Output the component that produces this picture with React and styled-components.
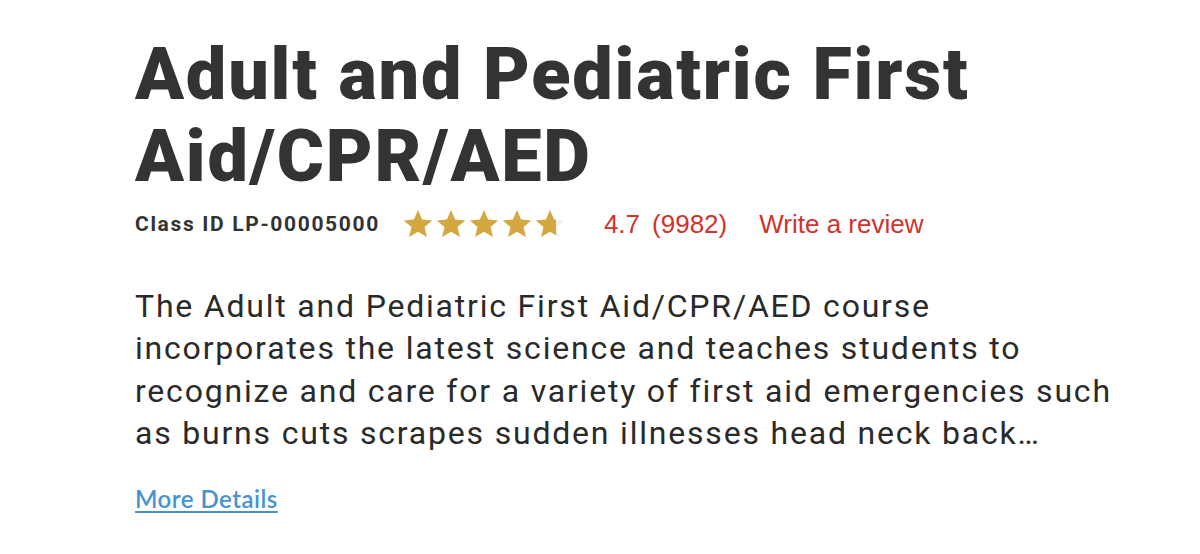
import React from "react";
import styled, { createGlobalStyle } from "styled-components";

const GlobalStyle = createGlobalStyle`
  body {
    margin: 0;
    background: #fff;
    font-family: Roboto, "Liberation Sans", sans-serif;
  }
`

const Page = styled.div`
  padding: 34px 60px 0 135px;
`

const Title = styled.h1`
  margin: 0;
  font-family: Roboto, sans-serif;
  font-weight: 900;
  font-size: 72px;
  line-height: 82px;
  letter-spacing: 1.8px;
  color: #333;
  max-width: 900px;
`

const MetaRow = styled.div`
  display: flex;
  align-items: center;
  margin-top: 4px;
  height: 44px;
`

const ClassId = styled.span`
  font-family: Roboto, sans-serif;
  font-weight: 700;
  font-size: 21px;
  letter-spacing: 1.65px;
  color: #333;
  margin-right: 22px;
`

const Stars = styled.div`
  display: flex;
  gap: 1px;
  margin-right: 38px;
`

const RedText = styled.a`
  font-family: "Liberation Sans", Arial, sans-serif;
  font-size: 26px;
  color: #d0332b;
  text-decoration: none;
  margin-right: ${(p) => p.$gap || 0}px;
`

const Description = styled.p`
  margin: 39px 0 0;
  font-family: Roboto, sans-serif;
  font-size: 32px;
  line-height: 42.3px;
  letter-spacing: 1.8px;
  color: #2a2a2a;
  max-width: 985px;
  display: -webkit-box;
  -webkit-line-clamp: 4;
  -webkit-box-orient: vertical;
  overflow: hidden;
`

const MoreLink = styled.a`
  display: inline-block;
  margin-top: 30px;
  font-family: Lato, "Open Sans", sans-serif;
  font-size: 24px;
  font-weight: 600;
  letter-spacing: 0.5px;
  color: #4893ce;
  text-decoration: underline;
  text-underline-offset: 3px;
  text-decoration-thickness: 2px;
`

const STAR = "M12 1.5l3.1 7.1 7.6.7-5.8 5 1.8 7.5L12 17.8l-6.7 4 1.8-7.5-5.8-5 7.6-.7z";

const Star = ({ fill, id }) => (
  <svg width="32" height="32" viewBox="0 0 24 24">
    <defs>
      <linearGradient id={id}>
        <stop offset={fill} stopColor="#d4a841" />
        <stop offset={fill} stopColor="#f0f0f0" />
      </linearGradient>
    </defs>
    <path d={STAR} fill={`url(#${id})`} />
  </svg>
);

const Rating = ({ value }) => (
  <Stars>
    {[0, 1, 2, 3, 4].map((i) => (
      <Star key={i} id={`star-${i}`} fill={Math.max(0, Math.min(1, value - i))} />
    ))}
  </Stars>
);

export default function App() {
  return (
    <>
      <GlobalStyle />
      <Page>
        <Title>Adult and Pediatric First Aid/CPR/AED</Title>
        <MetaRow>
          <ClassId>Class ID LP-00005000</ClassId>
          <Rating value={4.7} />
          <RedText $gap={12}>4.7</RedText>
          <RedText $gap={32}>(9982)</RedText>
          <RedText href="#">Write a review</RedText>
        </MetaRow>
        <Description>
          The Adult and Pediatric First Aid/CPR/AED course incorporates the latest science and
          teaches students to recognize and care for a variety of first aid emergencies such as
          burns cuts scrapes sudden illnesses head neck back injuries heat and cold emergencies and
          how to respond to breathing and cardiac emergencies
        </Description>
        <MoreLink href="#">More Details</MoreLink>
      </Page>
    </>
  );
}
